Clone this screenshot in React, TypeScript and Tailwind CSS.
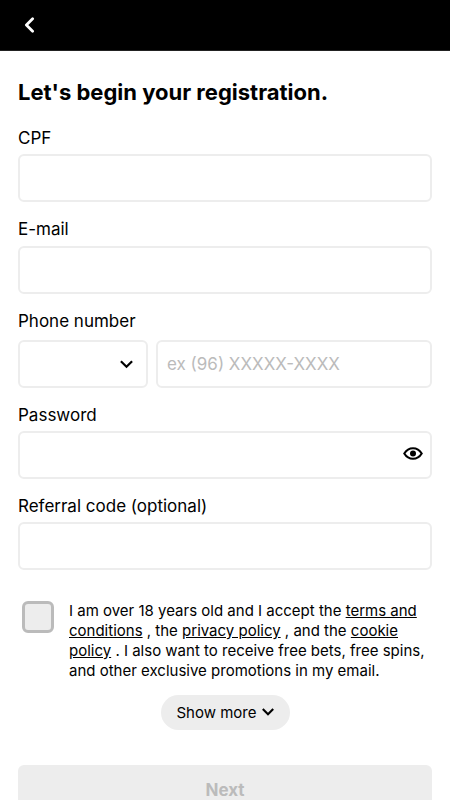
import React from "react";

const box = "block h-12 w-full rounded-[6px] border-2 border-[#ededed] bg-white outline-none";

function Field({ label, children, className }: { label: string; children: React.ReactNode; className: string }) {
  return (
    <div className={className}>
      <div className="text-[17px] leading-5">{label}</div>
      {children}
    </div>
  );
}

export default function App() {
  return (
    <div className="h-[800px] w-full overflow-hidden bg-white font-['Inter',sans-serif] text-black">
      <header className="flex h-[51px] items-center border-b border-[#222] bg-black pl-[24px]">
        <svg width="11" height="16" viewBox="0 0 11 16" fill="none" stroke="white" strokeWidth="2.8" strokeLinecap="round" strokeLinejoin="round">
          <path d="M8.6 1.8 2.4 8 8.6 14.2" />
        </svg>
      </header>
      <main className="px-[18px] pt-[27px]">
        <h1 className="text-[22px] leading-7 font-bold">Let's begin your registration.</h1>
        <Field label="CPF" className="mt-[22px]">
          <input className={box + " mt-[6px]"} />
        </Field>
        <Field label="E-mail" className="mt-[17px]">
          <input className={box + " mt-[7px]"} />
        </Field>
        <Field label="Phone number" className="mt-[17px]">
          <div className="mt-[9px] flex gap-2">
            <div className="flex h-12 w-[130px] items-center justify-end rounded-[6px] border-2 border-[#ededed] pr-[13px]">
              <svg width="13" height="9" viewBox="0 0 13 9" fill="none" stroke="black" strokeWidth="2.2">
                <path d="M.9 1.2 6.5 6.8 12.1 1.2" />
              </svg>
            </div>
            <div className="flex h-12 flex-1 items-center rounded-[6px] border-2 border-[#ededed] pt-[2px] pl-[9px] text-[17px] text-[#bbb]">
              ex (96) XXXXX-XXXX
            </div>
          </div>
        </Field>
        <Field label="Password" className="mt-[17px]">
          <div className="mt-[6px] flex h-12 items-center justify-end rounded-[6px] border-2 border-[#ededed] pr-[7px] pb-[3px]">
            <svg width="20" height="13" viewBox="0 0 20 13" fill="none" stroke="black" strokeWidth="2.1">
              <path d="M1.3 6.5C3.4 3 6.4 1.2 10 1.2S16.6 3 18.7 6.5C16.6 10 13.6 11.8 10 11.8S3.4 10 1.3 6.5Z" />
              <circle cx="10" cy="6.5" r="3" fill="black" stroke="none" />
            </svg>
          </div>
        </Field>
        <Field label="Referral code (optional)" className="mt-[17px]">
          <input className={box + " mt-[6px]"} />
        </Field>
        <div className="mt-[31px] flex">
          <div className="ml-1 h-8 w-8 shrink-0 rounded-[6px] border-[3px] border-[#bbb] bg-[#ededed]" />
          <p className="ml-[15px] text-[15px] leading-5 whitespace-nowrap">
            I am over 18 years old and I accept the <span className="underline">terms and</span><br />
            <span className="underline">conditions</span> , the <span className="underline">privacy policy</span> , and the <span className="underline">cookie</span><br />
            <span className="underline">policy</span> . I also want to receive free bets, free spins,<br />
            and other exclusive promotions in my email.
          </p>
        </div>
        <button className="mx-auto mt-[14px] flex h-[35px] w-[129px] items-center justify-center gap-[5px] rounded-full bg-[#ededed] pt-px text-[15px]">
          Show more
          <svg className="mb-[2px]" width="12" height="8" viewBox="0 0 12 8" fill="none" stroke="black" strokeWidth="2.1">
            <path d="M.8 1 6 6.2 11.2 1" />
          </svg>
        </button>
        <button className="mt-[35px] block h-[51px] w-full rounded-[6px] bg-[#ededed] text-[17px] font-bold text-[#bbb]">Next</button>
      </main>
    </div>
  );
}
